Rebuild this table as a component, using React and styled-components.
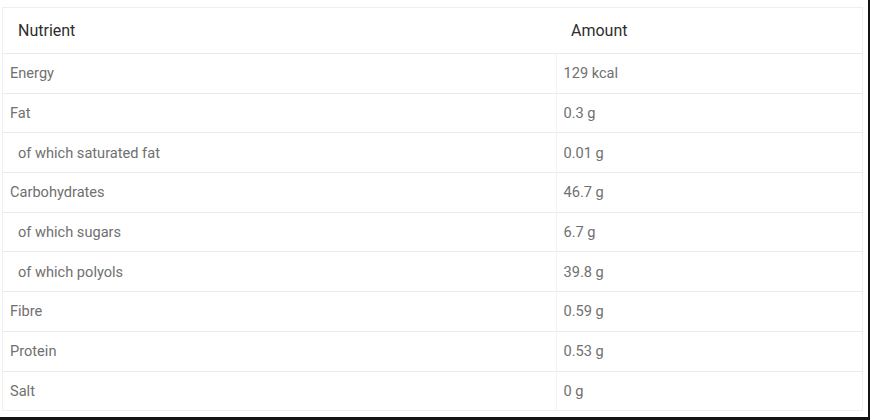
import styled, { createGlobalStyle } from 'styled-components';

const GlobalStyle = createGlobalStyle`
  body{
    margin:0;
    background:#fff;
    font-family:Roboto,'Liberation Sans',sans-serif;
  }
`

const Frame = styled.div`
  width:870px;
  height:420px;
  box-sizing:border-box;
  border-right:2px solid #141414;
  border-bottom:3px solid #141414;
  padding:7px 6px 0 2px;
  background:#fff;
`

const Table = styled.table`
  width:861px;
  border-collapse:collapse;
  table-layout:fixed;
  border:1px solid #efefef;
`

const HeadCell = styled.th`
  height:45px;
  padding:0 15px;
  text-align:left;
  font-size:16px;
  font-weight:400;
  color:#2e2e2e;
  border-bottom:1px solid #ebebeb;
  &:first-child{ width:523px; }
`

const Row = styled.tr`
  height:39.7px;
  border-bottom:1px solid #ebebeb;
  &:last-child{ border-bottom:1px solid #efefef; }
`

const Cell = styled.td`
  padding:0 7px 0 ${p => (p.$sub ? '15px' : '7px')};
  font-size:14.6px;
  color:#707070;
  &:first-child{ border-right:1px solid #f3f3f3; }
`

const rows = [
  ['Energy','129 kcal'],
  ['Fat','0.3 g'],
  ['of which saturated fat','0.01 g',true],
  ['Carbohydrates','46.7 g'],
  ['of which sugars','6.7 g',true],
  ['of which polyols','39.8 g',true],
  ['Fibre','0.59 g'],
  ['Protein','0.53 g'],
  ['Salt','0 g'],
]

function App(){
  return(
    <Frame>
      <GlobalStyle/>
      <Table>
        <thead>
          <tr>
            <HeadCell>Nutrient</HeadCell>
            <HeadCell>Amount</HeadCell>
          </tr>
        </thead>
        <tbody>
          {rows.map(([name,amount,sub]) => (
            <Row key={name}>
              <Cell $sub={sub}>{name}</Cell>
              <Cell>{amount}</Cell>
            </Row>
          ))}
        </tbody>
      </Table>
    </Frame>
  )
}

export default App;
